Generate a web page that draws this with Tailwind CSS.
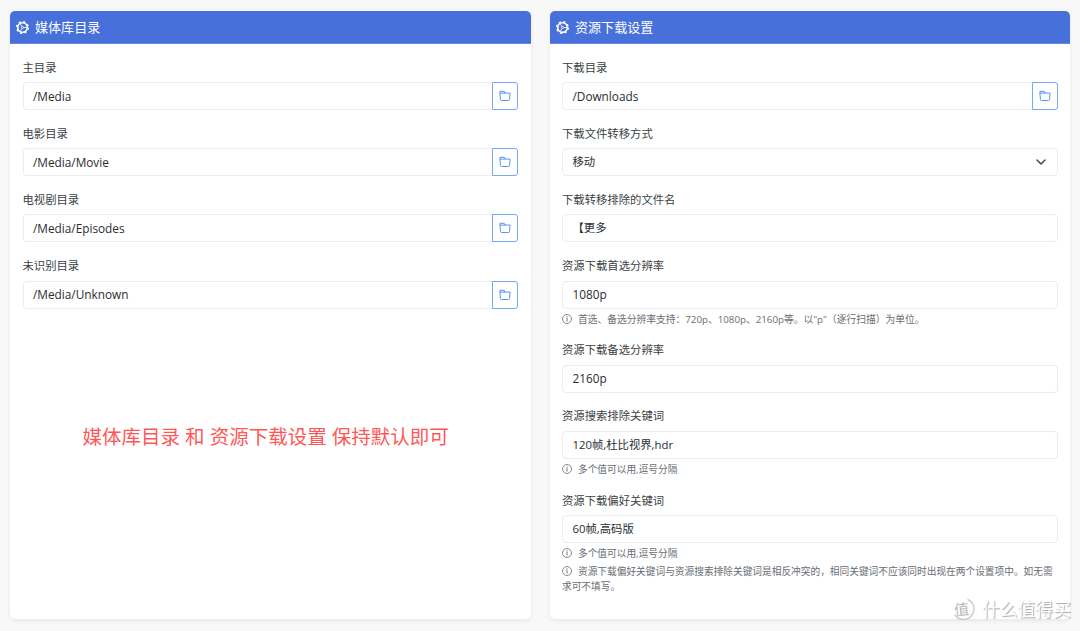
<!DOCTYPE html>
<html lang="zh-CN">
<head>
<meta charset="utf-8">
<title>设置</title>
<script src="https://cdn.jsdelivr.net/npm/@tailwindcss/browser@4"></script>
</head>
<body class="relative h-[631px] w-[1080px] overflow-hidden bg-[#f8f8f8] font-['Open_Sans','Noto_Sans_CJK_SC',sans-serif] text-[11.35px] leading-[18px] text-[#3b3f44]">
<svg class="hidden">
  <symbol id="gear" viewBox="0 0 16 16"><g fill="none" stroke="currentColor"><circle cx="8" cy="8" r="5.8" stroke-width="2"/><circle cx="8" cy="8" r="7.2" stroke-width="1.6" stroke-dasharray="2.8 2.855"/><path d="M8 8H13M8 8 5.4 3.6M8 8 5.4 12.4" stroke-width="1"/></g><circle cx="8" cy="8" r="1.6" fill="currentColor"/><circle cx="8" cy="8" r=".9" fill="#4770db"/></symbol>
  <symbol id="folder" viewBox="0 0 12 12"><g fill="none" stroke="currentColor" stroke-linejoin="round"><path d="M.9 3.1h10.2l-.6 6.5q-.1.9-1 .9h-7q-.9 0-1-.9z" stroke-width="1"/><path d="M1 3.1V2.1q0-.8.8-.8h2.5q.5 0 .8.3l1.1 1.3" stroke-width="1.1"/></g></symbol>
  <symbol id="info" viewBox="0 0 10 10"><circle cx="5" cy="5" r="4.5" fill="none" stroke="currentColor" stroke-width=".8"/><path d="M4.4 4.3h.8L4.9 7.2h.6" fill="none" stroke="currentColor" stroke-width=".85"/><circle cx="5.1" cy="2.8" r=".6" fill="currentColor"/></symbol>
</svg>
<main class="grid grid-cols-2 gap-x-[19px] px-[10px] pt-[11px]">
  <section class="h-[608px] overflow-hidden rounded-[5px] bg-white shadow-[0_2px_4px_rgba(0,0,0,0.07)]">
    <h2 class="flex h-[33px] items-center gap-[6px] border-b border-[#6685df] bg-[#4770db] pl-[6px] text-[13.05px] text-white"><svg class="size-[13px]"><use href="#gear"/></svg>媒体库目录</h2>
    <div class="flex flex-col gap-[14.7px] px-[12.5px] pt-[14.5px]">
      <div><div class="mb-[5.5px]">主目录</div><div class="flex h-[28px] text-[11.8px] text-[#292d32]"><div class="flex flex-1 items-center rounded-l-[4px] border border-r-0 border-[#ebeced] pb-px pl-[9.5px]">/Media</div><button class="flex w-[26px] items-center justify-center rounded-r-[3px] border border-[#76a8fa] text-[#5593f8]"><svg class="size-[12px]"><use href="#folder"/></svg></button></div></div>
      <div><div class="mb-[5.5px]">电影目录</div><div class="flex h-[28px] text-[11.8px] text-[#292d32]"><div class="flex flex-1 items-center rounded-l-[4px] border border-r-0 border-[#ebeced] pb-px pl-[9.5px]">/Media/Movie</div><button class="flex w-[26px] items-center justify-center rounded-r-[3px] border border-[#76a8fa] text-[#5593f8]"><svg class="size-[12px]"><use href="#folder"/></svg></button></div></div>
      <div><div class="mb-[5.5px]">电视剧目录</div><div class="flex h-[28px] text-[11.8px] text-[#292d32]"><div class="flex flex-1 items-center rounded-l-[4px] border border-r-0 border-[#ebeced] pb-px pl-[9.5px]">/Media/Episodes</div><button class="flex w-[26px] items-center justify-center rounded-r-[3px] border border-[#76a8fa] text-[#5593f8]"><svg class="size-[12px]"><use href="#folder"/></svg></button></div></div>
      <div><div class="mb-[5.5px]">未识别目录</div><div class="flex h-[28px] text-[11.8px] text-[#292d32]"><div class="flex flex-1 items-center rounded-l-[4px] border border-r-0 border-[#ebeced] pb-px pl-[9.5px]">/Media/Unknown</div><button class="flex w-[26px] items-center justify-center rounded-r-[3px] border border-[#76a8fa] text-[#5593f8]"><svg class="size-[12px]"><use href="#folder"/></svg></button></div></div>
    </div>
    <p class="mt-[113px] pl-[72.5px] text-[19.5px] leading-[30px] whitespace-nowrap text-[#ff5757]">媒体库目录 和 资源下载设置 保持默认即可</p>
  </section>
  <section class="h-[608px] overflow-hidden rounded-[5px] bg-white shadow-[0_2px_4px_rgba(0,0,0,0.07)]">
    <h2 class="flex h-[33px] items-center gap-[6px] border-b border-[#6685df] bg-[#4770db] pl-[6.5px] text-[13.05px] text-white"><svg class="size-[13px]"><use href="#gear"/></svg>资源下载设置</h2>
    <div class="flex flex-col gap-[14.7px] px-[12.5px] pt-[14.5px]">
      <div><div class="mb-[5.5px]">下载目录</div><div class="flex h-[28px] text-[11.8px] text-[#292d32]"><div class="flex flex-1 items-center rounded-l-[4px] border border-r-0 border-[#ebeced] pb-px pl-[9.5px]">/Downloads</div><button class="flex w-[26px] items-center justify-center rounded-r-[3px] border border-[#76a8fa] text-[#5593f8]"><svg class="size-[12px]"><use href="#folder"/></svg></button></div></div>
      <div><div class="mb-[5.5px]">下载文件转移方式</div><div class="flex h-[28px] items-center justify-between rounded-[4px] border border-[#ebeced] pr-[11px] pl-[9.5px] text-[#292d32]">移动<svg class="h-[6px] w-[10px]" viewBox="0 0 10 6" fill="none" stroke="#41464b" stroke-width="1.5" stroke-linecap="round" stroke-linejoin="round"><path d="m1 1 4 4 4-4"/></svg></div></div>
      <div><div class="mb-[5.5px]">下载转移排除的文件名</div><div class="flex h-[28px] items-center rounded-[4px] border border-[#ebeced] pl-[9.5px] text-[#292d32]">【更多</div></div>
      <div><div class="mb-[5.5px]">资源下载首选分辨率</div><div class="flex h-[28px] items-center rounded-[4px] border border-[#ebeced] pb-px pl-[9.5px] text-[11.8px] text-[#292d32]">1080p</div>
        <p class="mt-[3px] text-[9.75px] leading-[15px] text-[#686d73]"><svg class="mr-[6px] inline size-[10px] align-[-1px]"><use href="#info"/></svg>首选、备选分辨率支持：720p、1080p、2160p等。以"p"（逐行扫描）为单位。</p></div>
      <div><div class="mb-[5.5px]">资源下载备选分辨率</div><div class="flex h-[28px] items-center rounded-[4px] border border-[#ebeced] pb-px pl-[9.5px] text-[11.8px] text-[#292d32]">2160p</div></div>
      <div><div class="mb-[5.5px]">资源搜索排除关键词</div><div class="flex h-[28px] items-center rounded-[4px] border border-[#ebeced] pl-[9.5px] text-[#292d32]">120帧,杜比视界,hdr</div>
        <p class="mt-[3px] text-[9.7px] leading-[15px] text-[#686d73]"><svg class="mr-[6px] inline size-[10px] align-[-1px]"><use href="#info"/></svg>多个值可以用,逗号分隔</p></div>
      <div><div class="mb-[5.5px]">资源下载偏好关键词</div><div class="flex h-[28px] items-center rounded-[4px] border border-[#ebeced] pl-[9.5px] text-[#292d32]">60帧,高码版</div>
        <p class="mt-[3px] text-[9.7px] leading-[15px] text-[#686d73]"><svg class="mr-[6px] inline size-[10px] align-[-1px]"><use href="#info"/></svg>多个值可以用,逗号分隔</p>
        <p class="mt-[3px] text-[9.7px] leading-[15px] whitespace-nowrap text-[#686d73]"><svg class="mr-[6px] inline size-[10px] align-[-1px]"><use href="#info"/></svg>资源下载偏好关键词与资源搜索排除关键词是相反冲突的，相同关键词不应该同时出现在两个设置项中。如无需<br>求可不填写。</p></div>
    </div>
  </section>
</main>
<div class="absolute top-[597px] left-[951px] flex items-center gap-[7px] whitespace-nowrap text-white [text-shadow:1px_1px_1px_#a4a4a4]">
  <span class="relative flex size-[24px] items-center justify-center">
    <svg class="absolute inset-0 size-[24px]" viewBox="0 0 24 24" fill="none"><path d="M17 2.6a10.4 10.4 0 0 1-4 19.8 10.4 10.4 0 0 1-9.2-4.6" stroke="#c4c4c4" stroke-width="1.2" stroke-linecap="round"/></svg>
    <span class="relative -left-px -rotate-6 text-[15px] text-[#b8b8b8] [text-shadow:none]">值</span></span><span class="text-[17.8px] leading-[22px]">什么值得买</span>
</div>
</body>
</html>
